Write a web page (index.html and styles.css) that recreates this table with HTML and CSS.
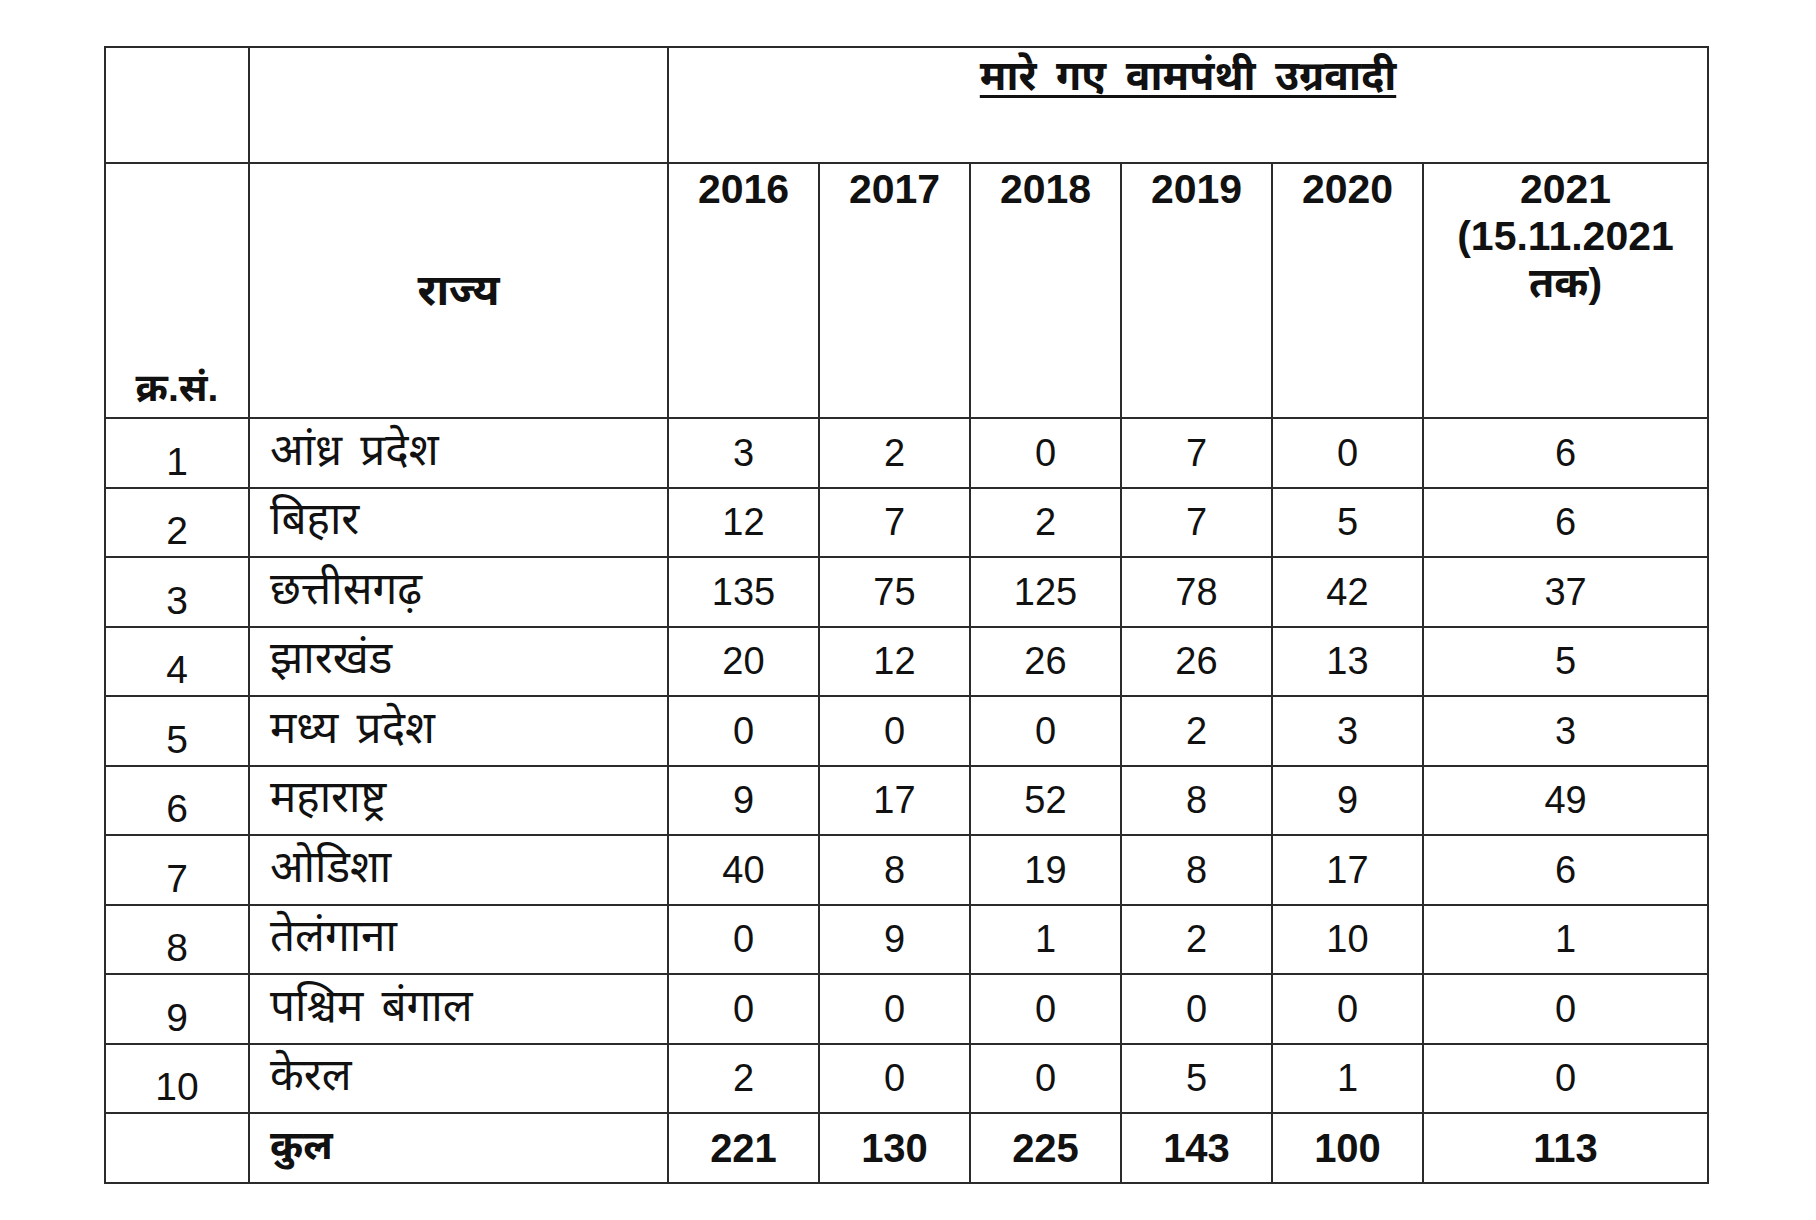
FILE: index.html
```html
<!DOCTYPE html>
<html lang="hi">
<head>
<meta charset="utf-8">
<title>मारे गए वामपंथी उग्रवादी</title>
<link rel="stylesheet" href="styles.css">
</head>
<body>
<div class="page">
  <table class="data">
    <colgroup>
      <col class="c-sn"><col class="c-state">
      <col class="c-yr"><col class="c-yr"><col class="c-yr"><col class="c-yr"><col class="c-yr">
      <col class="c-last">
    </colgroup>
    <thead>
      <tr class="h1">
        <th></th>
        <th></th>
        <th colspan="6" class="title"><span>मारे गए वामपंथी उग्रवादी</span></th>
      </tr>
      <tr class="h2">
        <th class="sn-head">क्र.सं.</th>
        <th class="state-head">राज्य</th>
        <th class="yr">2016</th>
        <th class="yr">2017</th>
        <th class="yr">2018</th>
        <th class="yr">2019</th>
        <th class="yr">2020</th>
        <th class="yr">2021<br>(15.11.2021<br>तक)</th>
      </tr>
    </thead>
    <tbody>
      <tr><td class="sn">1</td><td class="st">आंध्र प्रदेश</td><td>3</td><td>2</td><td>0</td><td>7</td><td>0</td><td>6</td></tr>
      <tr><td class="sn">2</td><td class="st">बिहार</td><td>12</td><td>7</td><td>2</td><td>7</td><td>5</td><td>6</td></tr>
      <tr><td class="sn">3</td><td class="st">छत्तीसगढ़</td><td>135</td><td>75</td><td>125</td><td>78</td><td>42</td><td>37</td></tr>
      <tr><td class="sn">4</td><td class="st">झारखंड</td><td>20</td><td>12</td><td>26</td><td>26</td><td>13</td><td>5</td></tr>
      <tr><td class="sn">5</td><td class="st">मध्य प्रदेश</td><td>0</td><td>0</td><td>0</td><td>2</td><td>3</td><td>3</td></tr>
      <tr><td class="sn">6</td><td class="st">महाराष्ट्र</td><td>9</td><td>17</td><td>52</td><td>8</td><td>9</td><td>49</td></tr>
      <tr><td class="sn">7</td><td class="st">ओडिशा</td><td>40</td><td>8</td><td>19</td><td>8</td><td>17</td><td>6</td></tr>
      <tr><td class="sn">8</td><td class="st">तेलंगाना</td><td>0</td><td>9</td><td>1</td><td>2</td><td>10</td><td>1</td></tr>
      <tr><td class="sn">9</td><td class="st">पश्चिम बंगाल</td><td>0</td><td>0</td><td>0</td><td>0</td><td>0</td><td>0</td></tr>
      <tr><td class="sn">10</td><td class="st">केरल</td><td>2</td><td>0</td><td>0</td><td>5</td><td>1</td><td>0</td></tr>
      <tr class="total"><td class="sn"></td><td class="st">कुल</td><td>221</td><td>130</td><td>225</td><td>143</td><td>100</td><td>113</td></tr>
    </tbody>
  </table>
</div>
</body>
</html>
```
FILE: styles.css
```css
html, body {
  margin: 0;
  padding: 0;
  background: #ffffff;
}

body {
  font-family: "Liberation Sans", Arial, "Noto Sans Devanagari", "Lohit Devanagari", "FreeSans", sans-serif;
  color: #111111;
}

.page {
  padding: 46px 0 0 104px;
}

.data {
  border-collapse: collapse;
  table-layout: fixed;
  width: 1602px;
}

.c-sn { width: 144px; }
.c-state { width: 419px; }
.c-yr { width: 151px; }
.c-last { width: 285px; }

.data th,
.data td {
  border: 2px solid #2b2b2b;
  padding: 0;
  text-align: center;
  vertical-align: middle;
  line-height: 1;
}

.data th {
  font-weight: 700;
  font-size: 40px;
}

.data tr.h1 { height: 116px; }
.data tr.h2 { height: 255px; }
.data tbody tr { height: 69.5px; }

.h1 th {
  vertical-align: top;
}

.title span {
  display: inline-block;
  margin-top: 6px;
  font-size: 41px;
  line-height: 1.1;
  text-decoration: underline;
  text-decoration-thickness: 3px;
  text-underline-offset: 5px;
  text-decoration-skip-ink: none;
  word-spacing: 8px;
}

.h2 .yr {
  vertical-align: top;
  padding-top: 2px;
  line-height: 47px;
  font-size: 41px;
}

.h2 .sn-head {
  vertical-align: bottom;
  padding-bottom: 10px;
  font-size: 39px;
}

.h2 .state-head {
  font-size: 43px;
}

.data td {
  font-size: 38px;
}

.data td.sn {
  vertical-align: bottom;
  padding-bottom: 6px;
  font-size: 39px;
}

.data td.st {
  text-align: left;
  padding-left: 20px;
  padding-bottom: 6px;
  font-size: 44px;
  word-spacing: 6px;
}

.data .total td {
  font-weight: 700;
  font-size: 40px;
}
```
